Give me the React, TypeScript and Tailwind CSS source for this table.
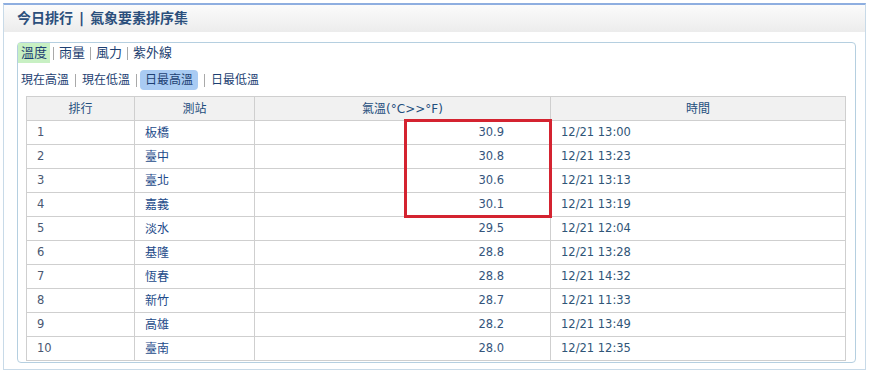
import React from "react";

const rows = [
  ["1", "板橋", "30.9", "12/21 13:00"],
  ["2", "臺中", "30.8", "12/21 13:23"],
  ["3", "臺北", "30.6", "12/21 13:13"],
  ["4", "嘉義", "30.1", "12/21 13:19"],
  ["5", "淡水", "29.5", "12/21 12:04"],
  ["6", "基隆", "28.8", "12/21 13:28"],
  ["7", "恆春", "28.8", "12/21 14:32"],
  ["8", "新竹", "28.7", "12/21 11:33"],
  ["9", "高雄", "28.2", "12/21 13:49"],
  ["10", "臺南", "28.0", "12/21 12:35"],
];

const font = { fontFamily: '"DejaVu Sans", "Noto Sans CJK TC", sans-serif' };

function Sep({ wide }: { wide?: boolean }) {
  return (
    <span
      className={
        wide
          ? "mx-[6px] inline-block h-[13px] w-px bg-[#a9a9a9]"
          : "mx-[3px] inline-block h-[13px] w-px bg-[#a9a9a9]"
      }
    />
  );
}

export default function App() {
  return (
    <div className="h-[377px] w-[870px] bg-white pl-[3px] pt-[3px]" style={font}>
      <div className="h-[367px] w-[863px] border border-t-2 border-[#c8dae8] border-t-[#8eaee0]">
        <div className="flex h-[27px] items-center bg-gradient-to-b from-[#fbfbfb] to-[#ececec] pl-[13px] text-[14px] font-bold text-[#2b4f7c]">
          <span>今日排行</span>
          <span className="mx-[6px]">|</span>
          <span>氣象要素排序集</span>
        </div>
        <div className="ml-[13px] mt-[10px] h-[321px] w-[839px] rounded-[4px] border border-[#b5cfe0]">
          <div className="flex h-[20px] items-center text-[13px] text-[#1d3f72]">
            <span className="flex h-[20px] items-center bg-[#c8f0c3] px-[3px]">溫度</span>
            <Sep />
            <span className="px-[2px]">雨量</span>
            <Sep />
            <span className="px-[2px]">風力</span>
            <Sep />
            <span className="px-[2px]">紫外線</span>
          </div>
          <div className="mt-[7px] flex h-[20px] items-center pl-[3px] text-[12px] text-[#1d3f72]">
            <span>現在高溫</span>
            <Sep wide />
            <span>現在低溫</span>
            <Sep wide />
            <span className="-ml-[3px] flex h-[20px] items-center rounded-[4px] bg-[#a9cbf3] px-[5px]">日最高溫</span>
            <Sep wide />
            <span>日最低溫</span>
          </div>
          <div className="relative ml-[8px] mt-[6px] w-[819px]">
            <table className="w-[819px] table-fixed border-collapse text-[12px]">
              <colgroup>
                <col className="w-[108px]" />
                <col className="w-[120px]" />
                <col className="w-[296px]" />
                <col className="w-[295px]" />
              </colgroup>
              <thead>
                <tr className="h-[24px] bg-[#f1f1f1] text-[#1f4e7d]">
                  <th className="border border-[#cfcfcf] font-normal">排行</th>
                  <th className="border border-[#cfcfcf] font-normal">測站</th>
                  <th className="border border-[#cfcfcf] font-normal">氣溫(°C&gt;&gt;°F)</th>
                  <th className="border border-[#cfcfcf] font-normal">時間</th>
                </tr>
              </thead>
              <tbody>
                {rows.map((r) => (
                  <tr key={r[0]} className="h-[24px]">
                    <td className="border border-[#cfcfcf] pl-[10px] text-[11.5px] text-[#4a5872]">{r[0]}</td>
                    <td className="border border-[#cfcfcf] pl-[10px] text-[#1d4b8a]">{r[1]}</td>
                    <td className="border border-[#cfcfcf] pr-[46px] text-right text-[11.5px] text-[#35557c]">{r[2]}</td>
                    <td className="border border-[#cfcfcf] pl-[10px] text-[11.5px] text-[#2f5577]">{r[3]}</td>
                  </tr>
                ))}
              </tbody>
            </table>
            <div className="absolute left-[378px] top-[23px] h-[99px] w-[148px] border-[3px] border-[#d42330]" />
          </div>
        </div>
      </div>
    </div>
  );
}
